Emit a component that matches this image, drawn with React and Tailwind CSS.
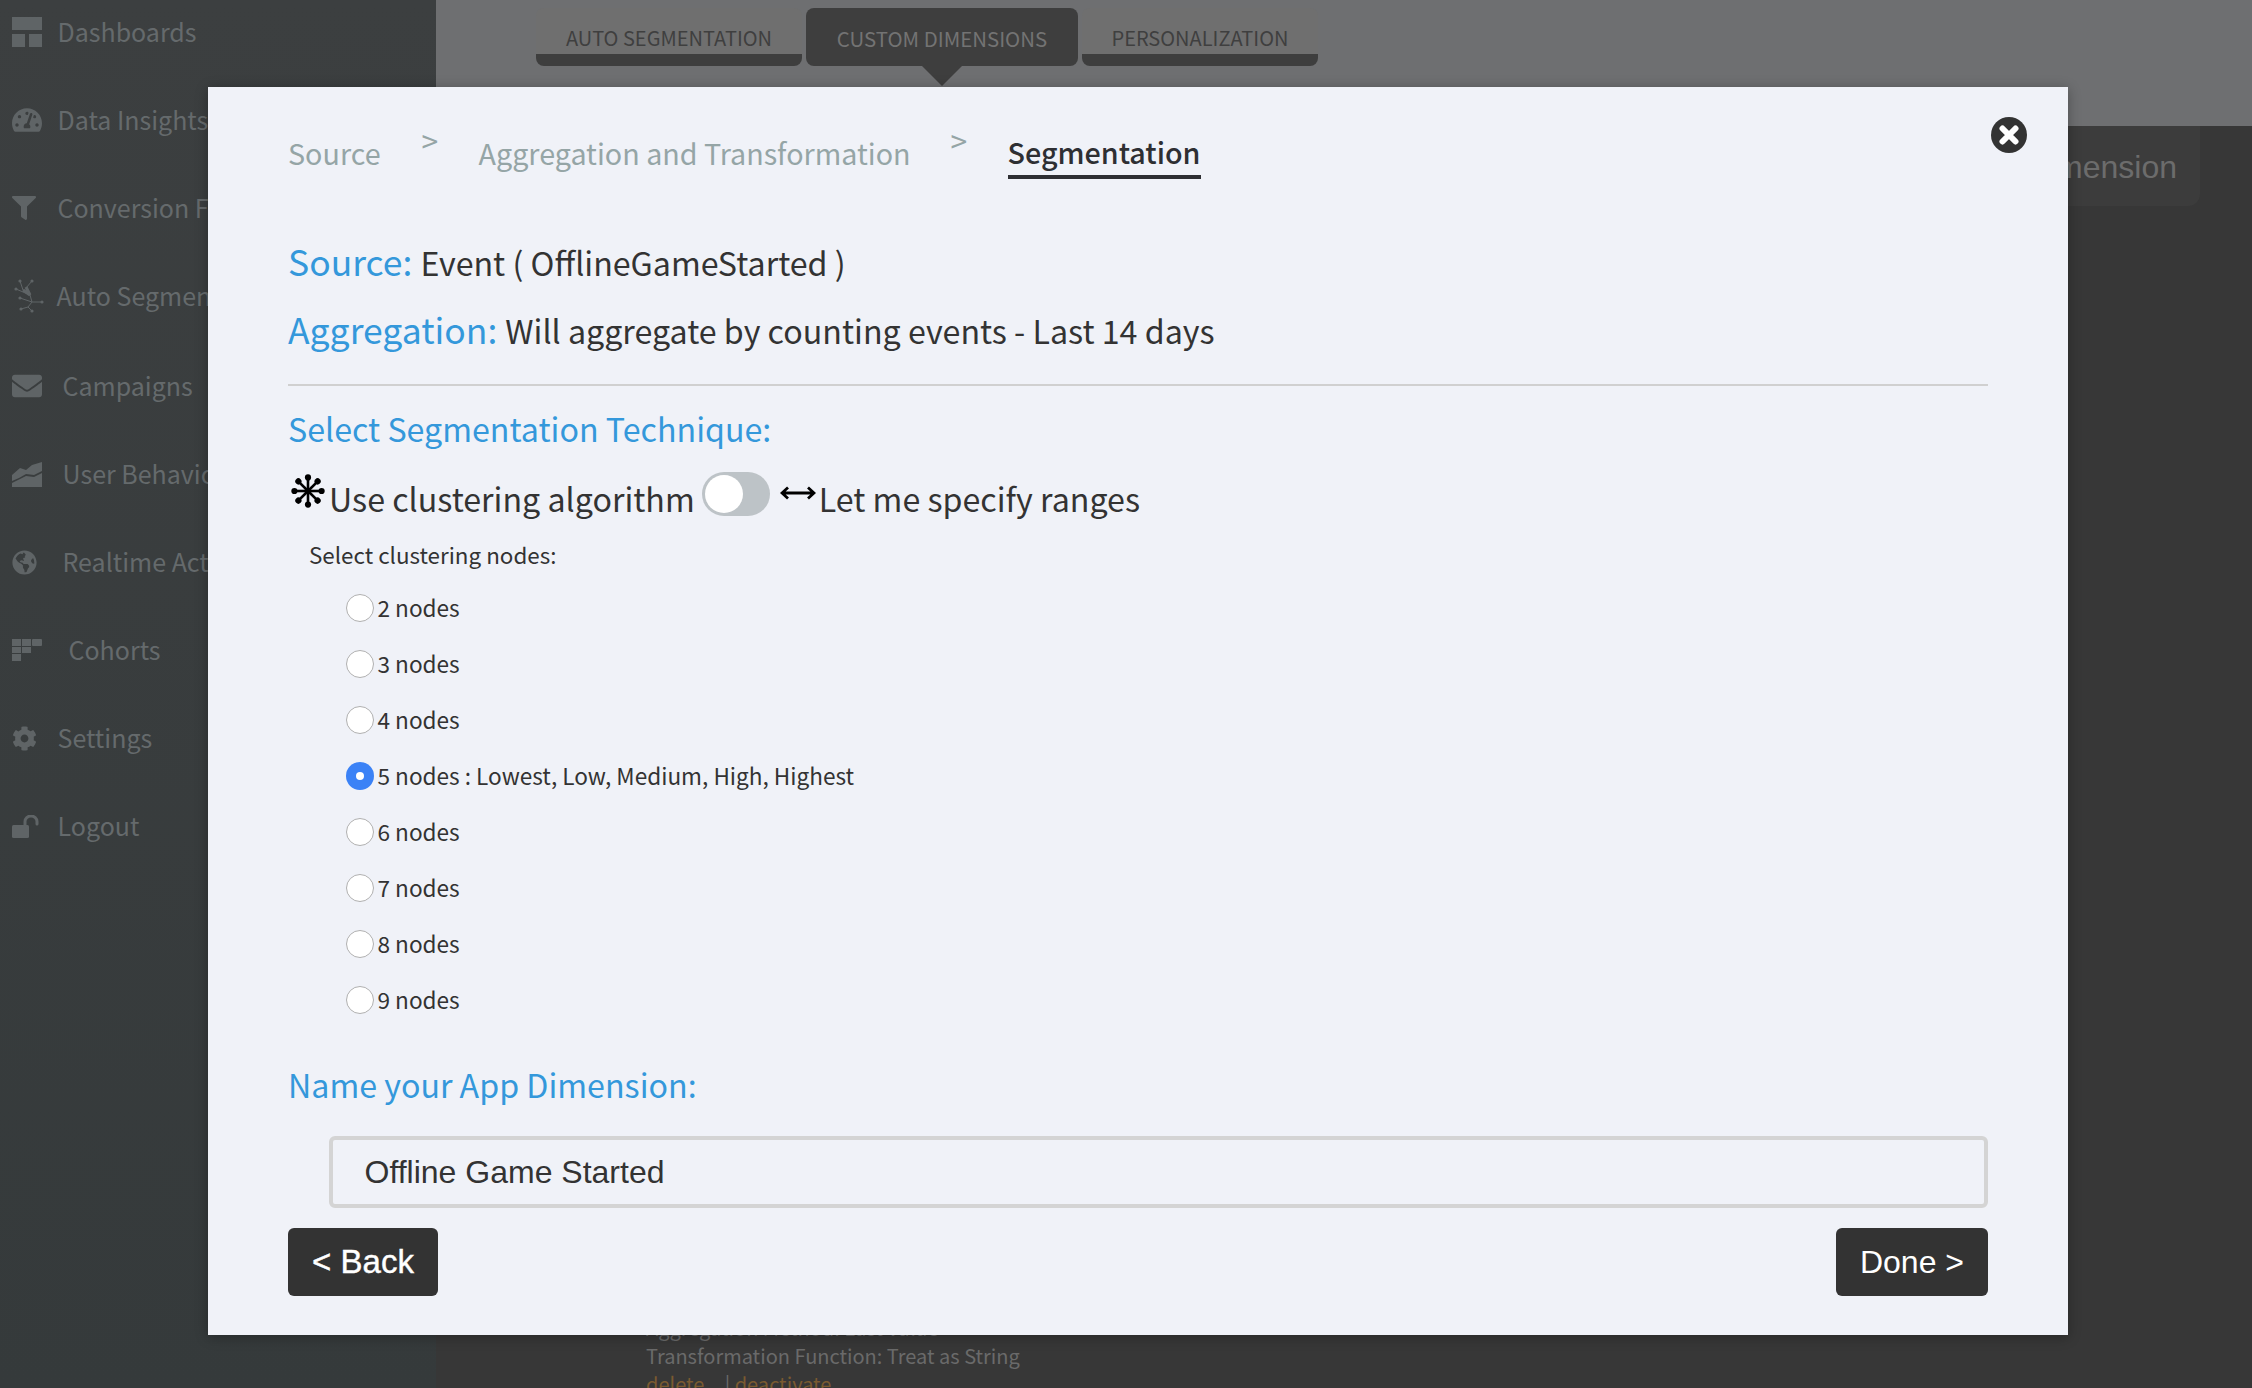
import React from "react";
import { FaTachometerAlt, FaFilter, FaEnvelope, FaGlobeAmericas, FaCog } from "react-icons/fa";

const sans = "font-['Noto_Sans_CJK_SC','Liberation_Sans',sans-serif]";

const DashIcon = () => (
  <svg width="30" height="30" viewBox="0 0 30 30" fill="currentColor">
    <rect x="0" y="0" width="30" height="13" />
    <rect x="0" y="17" width="13" height="13" />
    <rect x="17" y="17" width="13" height="13" />
  </svg>
);
const TreeIcon = () => (
  <svg width="32" height="36" viewBox="0 0 32 36" fill="none" stroke="currentColor" strokeWidth="1">
    <path d="M8 3 L11 12 L18 17 L20 24 L16 29 L20 33 M20 24 L30 24 M18 17 L4 11 M18 17 L14 10 L20 3 M20 24 L8 20 M16 29 L9 31" />
    <path d="M11 12 L18 17 L14 9" strokeWidth="3" />
    {[[8,3],[20,3],[4,11],[30,24],[8,20],[9,31],[20,33]].map(([x,y],i)=><circle key={i} cx={x} cy={y} r="1.6" fill="currentColor" stroke="none"/>)}
  </svg>
);
const AreaIcon = () => (
  <svg width="30" height="25" viewBox="0 0 30 25" fill="currentColor">
    <path d="M0 13 L8 6 L14 8 L20 3 L30 0 L30 9 L22 13 L14 12 L7 16 L0 19 Z" />
    <path d="M0 21 L8 17 L14 14 L22 15 L30 11 L30 25 L0 25 Z" />
  </svg>
);
const CohortIcon = () => (
  <svg width="30" height="22" viewBox="0 0 30 22" fill="currentColor">
    <rect x="0" y="0" width="9" height="7" /><rect x="10" y="0" width="9" height="7" /><rect x="20" y="0" width="10" height="7" rx="1" />
    <rect x="0" y="8" width="9" height="6" /><rect x="10" y="8" width="9" height="6" />
    <rect x="0" y="15" width="9" height="7" />
  </svg>
);
const UnlockIcon = () => (
  <svg width="27" height="23" viewBox="0 0 27 23" fill="currentColor">
    <rect x="0" y="10" width="17" height="13" rx="1.5" />
    <path d="M13 10 V6.5 A6 5.5 0 0 1 25 6.5 V9" fill="none" stroke="currentColor" strokeWidth="3" strokeLinecap="round" />
  </svg>
);
const StarIcon = () => (
  <svg width="34" height="34" viewBox="0 0 34 34" stroke="black" fill="black" strokeWidth="2.6">
    {[0,45,90,135,180,225,270,315].map((a) => (
      <g key={a} transform={`rotate(${a} 17 17)`}>
        <line x1="17" y1="17" x2="17" y2="4" />
        <circle cx="17" cy="3.4" r="3.1" stroke="none" />
      </g>
    ))}
  </svg>
);
const ArrowsIcon = () => (
  <svg width="36" height="14" viewBox="0 0 36 14" fill="none" stroke="black" strokeWidth="2.8">
    <path d="M2 7 H34 M8 1.5 L2 7 L8 12.5 M28 1.5 L34 7 L28 12.5" />
  </svg>
);
const CloseIcon = () => (
  <svg width="20" height="20" viewBox="0 0 20 20" stroke="white" strokeWidth="6" strokeLinecap="round">
    <path d="M3.5 3.5 L16.5 16.5 M16.5 3.5 L3.5 16.5" />
  </svg>
);

const items = [
  ["Dashboards", <DashIcon />, "ml-0", ""],
  ["Data Insights", <FaTachometerAlt size={30} />, "ml-0", ""],
  ["Conversion Funnels", <FaFilter size={24} />, "ml-0", ""],
  ["Auto Segmentation", <TreeIcon />, "-ml-[1px]", ""],
  ["Campaigns", <FaEnvelope size={30} />, "ml-[5px]", "mt-[2px]"],
  ["User Behavior", <AreaIcon />, "ml-[5px]", ""],
  ["Realtime Activity", <FaGlobeAmericas size={25} />, "ml-[5px]", ""],
  ["Cohorts", <CohortIcon />, "ml-[11px]", ""],
  ["Settings", <FaCog size={25} />, "ml-0", ""],
  ["Logout", <UnlockIcon />, "ml-0", ""],
];

const nodes = ["2 nodes", "3 nodes", "4 nodes", "5 nodes : Lowest, Low, Medium, High, Highest", "6 nodes", "7 nodes", "8 nodes", "9 nodes"];

export default function App() {
  return (
    <div className={`relative flex w-[2252px] h-[1388px] overflow-hidden bg-[#373737] ${sans}`}>
      <aside className="w-[436px] h-full shrink-0 bg-gradient-to-b from-[#3c3f40] to-[#353a3b] flex flex-col">
        <div className="flex flex-col -mt-[12px]">
          {items.map(([label, icon, ml, mt]) => (
            <div key={label} className={`h-[88px] flex items-center pl-[12px] text-[#5f6466] whitespace-nowrap ${mt}`}>
              <span className="w-[45.5px] flex items-center shrink-0">{icon}</span>
              <span className={`text-[25px] text-[#656a6c] ${ml}`}>{label}</span>
            </div>
          ))}
        </div>
      </aside>

      <main className="flex-1 flex flex-col">
        <div className="h-[126px] bg-[#6e6f71] pl-[100px] pt-[8px]">
          <div className="flex gap-[4px]">
            <div className="w-[266px] h-[58px] rounded-[8px] bg-[#6f6f6f] border-b-[12px] border-[#3e3e3e] flex items-center justify-center text-[#3f3f3f] text-[20px] pt-[14px]">AUTO SEGMENTATION</div>
            <div className="relative w-[272px] h-[58px] rounded-[8px] bg-[#3e3e3e] flex items-center justify-center text-[#737373] text-[20.4px] pt-[2px]">
              CUSTOM DIMENSIONS
              <div className="absolute left-[116px] top-[58px] w-0 h-0 border-l-[20px] border-r-[20px] border-t-[20px] border-l-transparent border-r-transparent border-t-[#3e3e3e]"></div>
            </div>
            <div className="w-[236px] h-[58px] rounded-[8px] bg-[#6f6f6f] border-b-[12px] border-[#3e3e3e] flex items-center justify-center text-[#3f3f3f] text-[20px] pt-[14px]">PERSONALIZATION</div>
          </div>
        </div>
        <div className="flex justify-end pr-[52px]">
          <div className="h-[80px] w-[400px] rounded-b-[12px] bg-[#3c3c3c] flex items-center justify-end pr-[23px] pt-[2px] text-[32px] text-[#6c6c6c] font-['Liberation_Sans',sans-serif]">Add App Dimension</div>
        </div>
        <div className="mt-auto pl-[210px] text-[20px] leading-[28px] text-[#6a6a6a] -mb-[10px]">
          <div>Aggregation Method: Last Value</div>
          <div>Transformation Function: Treat as String</div>
          <div className="text-[#7a5a30]">delete <span className="text-[#6a6a6a] ml-[16px]">|</span> deactivate</div>
        </div>
      </main>

      <div className="absolute left-[208px] top-[87px] w-[1860px] h-[1248px] bg-[#f0f2f8] shadow-[0_2px_12px_rgba(0,0,0,0.3)] px-[80px] text-[#333]">
        <button className="absolute right-[41px] top-[30px] w-[36px] h-[36px] rounded-full bg-[#333] flex items-center justify-center">
          <CloseIcon />
        </button>

        <div className="h-[68px] mt-[32px] flex items-start text-[28.7px] leading-[67px] text-[#95a5a6] whitespace-nowrap">
          <span>Source</span>
          <span className="ml-[41px] w-[57px] text-[30px] leading-[42px]">&gt;</span>
          <span>Aggregation and Transformation</span>
          <span className="ml-[40px] w-[57px] text-[30px] leading-[42px]">&gt;</span>
          <span className="font-medium text-[#2e2f33] leading-[60px] h-[60px] pt-[10px] border-b-[4px] border-[#2e2f33] flex items-center">Segmentation</span>
        </div>

        <div className="mt-[40px] h-[68px] flex items-center whitespace-nowrap">
          <span className="text-[35.5px] text-[#3498db]">Source:</span>
          <span className="ml-[8px] pt-[2px] text-[32.2px] text-[#333]">Event ( OfflineGameStarted )</span>
        </div>
        <div className="h-[68px] flex items-center whitespace-nowrap">
          <span className="text-[35.5px] text-[#3498db]">Aggregation:</span>
          <span className="ml-[8px] pt-[2px] text-[32.2px] text-[#333]">Will aggregate by counting events - Last 14 days</span>
        </div>
        <div className="mt-[21px] h-[2px] bg-[#d0d0d0]"></div>
        <div className="mt-[14px] h-[56px] flex items-center text-[32.2px] text-[#3498db] whitespace-nowrap">Select Segmentation Technique:</div>

        <div className="mt-[13px] h-[52px] flex items-start whitespace-nowrap text-[32.2px] text-[#333]">
          <span className="mt-[5px] ml-[3px] w-[38px] shrink-0"><StarIcon /></span>
          <span className="leading-[58px]">Use clustering algorithm</span>
          <span className="relative ml-[7px] mt-[3px] w-[68px] h-[44px] rounded-full bg-[#bdc3c7] shrink-0">
            <span className="absolute left-[3px] top-[3px] w-[38px] h-[38px] rounded-full bg-white"></span>
          </span>
          <span className="ml-[10px] mt-[17px] w-[39px] shrink-0"><ArrowsIcon /></span>
          <span className="leading-[58px]">Let me specify ranges</span>
        </div>

        <div className="mt-[13px] ml-[21px] h-[42px] flex items-center text-[22.4px] text-[#333] whitespace-nowrap">Select clustering nodes:</div>

        <div className="mt-[4px] ml-[58px] flex flex-col text-[22.6px] text-[#333] whitespace-nowrap">
          {nodes.map((n, i) => (
            <label key={n} className="h-[56px] flex items-center">
              {i === 3 ? (
                <span className="w-[28px] h-[28px] rounded-full bg-[#3b82f6] flex items-center justify-center shrink-0">
                  <span className="w-[8px] h-[8px] rounded-full bg-white"></span>
                </span>
              ) : (
                <span className="w-[28px] h-[28px] rounded-full bg-white border-[1.5px] border-[#b0b0b0] shrink-0"></span>
              )}
              <span className="ml-[3.5px]">{n}</span>
            </label>
          ))}
        </div>

        <div className="mt-[28px] h-[56px] flex items-center text-[32.2px] text-[#3498db] whitespace-nowrap">Name your App Dimension:</div>

        <input
          readOnly
          value="Offline Game Started"
          className="block mt-[24px] ml-[40.5px] w-[1659.5px] h-[72px] border-[4px] border-[#d4d4d4] rounded-[6px] bg-transparent pl-[32px] text-[32px] text-[#333] font-['Liberation_Sans',sans-serif] outline-none"
        />

        <div className="mt-[20px] flex justify-between font-['Liberation_Sans',sans-serif] text-[32px] text-white">
          <button className="w-[150px] h-[68px] rounded-[6px] bg-[#333] flex items-center justify-center text-[33px] [-webkit-text-stroke:0.4px_white]">&lt; Back</button>
          <button className="w-[152px] h-[68px] rounded-[6px] bg-[#333] flex items-center justify-center">Done &gt;</button>
        </div>
      </div>
    </div>
  );
}
